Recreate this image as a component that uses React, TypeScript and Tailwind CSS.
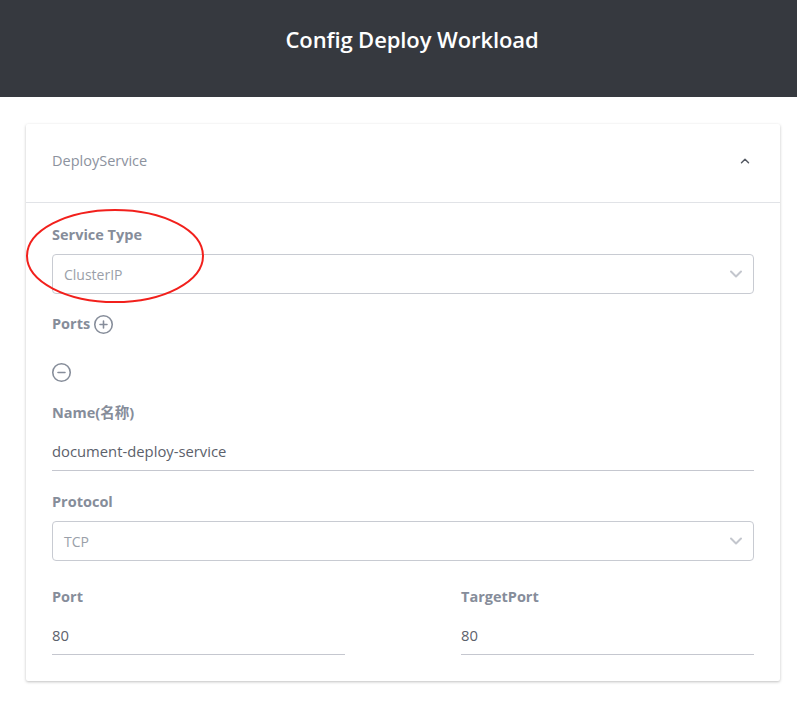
import { ChevronDown, ChevronUp, CirclePlus, CircleMinus } from "lucide-react";

const label = "text-[14.5px] leading-[20px] font-bold text-[#868d9a]";

function Select({ value }: { value: string }) {
	return (
		<div className="flex h-[40px] items-center justify-between rounded-[4px] border border-[#c8cbd2] pl-[11px] pr-[7px]">
			<span className="text-[14px] text-[#9a9fa9]">{value}</span>
			<ChevronDown size={20} strokeWidth={2.4} className="text-[#c3c6cd]" />
		</div>
	);
}

function Field({ value }: { value: string }) {
	return (
		<div className="flex h-[38px] items-center border-b border-[#c5c7cf] text-[14.8px] text-[#5c616b]">
			{value}
		</div>
	);
}

export default function App() {
	return (
		<div className="min-h-[712px] bg-white" style={{ fontFamily: '"Open Sans", "Noto Sans CJK SC", sans-serif' }}>
			<header className="flex h-[97px] items-start justify-center bg-[#36393f] pl-[27px] pt-[23px]">
				<h1 className="text-[22px] font-semibold tracking-[-0.1px] text-white">Config Deploy Workload</h1>
			</header>
			<div className="pl-[26px] pr-[17px] pt-[27px]">
				<div className="relative rounded-[2px] bg-white shadow-[0_1px_3px_rgba(0,0,0,0.25)]">
					<div className="flex h-[79px] items-center justify-between border-b border-[#e1e3e7] pb-[5px] pl-[26px] pr-[28px]">
						<span className="text-[14.5px] text-[#8c929e]">DeployService</span>
						<ChevronUp size={14} strokeWidth={2.5} className="text-[#555a63]" />
					</div>
					<div className="flex flex-col px-[26px] pb-[26px] pt-[22px]">
						<div className={label}>Service Type</div>
						<div className="mt-[9px]">
							<Select value="ClusterIP" />
						</div>
						<div className="mt-[19px] flex h-[22px] items-center gap-[3px]">
							<span className={label}>Ports</span>
							<CirclePlus size={21} strokeWidth={1.8} className="text-[#868d9a]" />
						</div>
						<div className="mt-[26px] flex h-[22px] items-center">
							<CircleMinus size={21} strokeWidth={1.8} className="-ml-[1px] text-[#868d9a]" />
						</div>
						<div className={`${label} mt-[20px]`}>Name(名称)</div>
						<div className="mt-[10px]">
							<Field value="document-deploy-service" />
						</div>
						<div className={`${label} mt-[21px]`}>Protocol</div>
						<div className="mt-[9px]">
							<Select value="TCP" />
						</div>
						<div className="mt-[26px] grid grid-cols-2 gap-x-[116px]">
							<div>
								<div className={label}>Port</div>
								<div className="mt-[10px]">
									<Field value="80" />
								</div>
							</div>
							<div>
								<div className={label}>TargetPort</div>
								<div className="mt-[10px]">
									<Field value="80" />
								</div>
							</div>
						</div>
					</div>
					<svg className="pointer-events-none absolute left-0 top-[82px]" width="190" height="102" viewBox="0 0 190 102">
						<ellipse cx="89" cy="50" rx="88" ry="46" fill="none" stroke="#f2201c" strokeWidth="2" />
					</svg>
				</div>
			</div>
		</div>
	);
}
